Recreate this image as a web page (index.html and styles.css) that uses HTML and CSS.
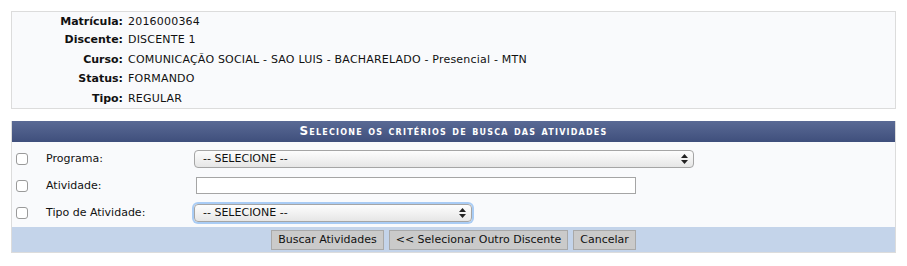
FILE: index.html
```html
<!DOCTYPE html>
<html lang="pt-BR">
  <head>
    <meta charset="UTF-8" />
    <link rel="stylesheet" href="styles.css">
    <title>Busca de Atividades</title>
  </head>
  <body>
    <div class="page">
      <div class="info">
        <div class="info-row"><span class="info-label">Matrícula:</span><span class="info-value">2016000364</span></div>
        <div class="info-row"><span class="info-label">Discente:</span><span class="info-value">DISCENTE 1</span></div>
        <div class="info-row"><span class="info-label">Curso:</span><span class="info-value">COMUNICAÇÃO SOCIAL - SAO LUIS - BACHARELADO - Presencial - MTN</span></div>
        <div class="info-row"><span class="info-label">Status:</span><span class="info-value">FORMANDO</span></div>
        <div class="info-row"><span class="info-label">Tipo:</span><span class="info-value">REGULAR</span></div>
      </div>

      <div class="form">
        <div class="form-title">Selecione os critérios de busca das atividades</div>
        <div class="form-body">
          <div class="form-row">
            <input type="checkbox" class="check">
            <label>Programa:</label>
            <span class="select select-wide">
              <select><option>-- SELECIONE --</option></select>
              <svg class="arrows" width="7" height="10" viewBox="0 0 7 10"><path d="M3.5 0 L7 4 H0 Z M3.5 10 L7 6 H0 Z" fill="#222"/></svg>
            </span>
          </div>
          <div class="form-row">
            <input type="checkbox" class="check">
            <label>Atividade:</label>
            <input type="text" class="text">
          </div>
          <div class="form-row">
            <input type="checkbox" class="check">
            <label>Tipo de Atividade:</label>
            <span class="select select-short focus">
              <select><option>-- SELECIONE --</option></select>
              <svg class="arrows" width="7" height="10" viewBox="0 0 7 10"><path d="M3.5 0 L7 4 H0 Z M3.5 10 L7 6 H0 Z" fill="#222"/></svg>
            </span>
          </div>
        </div>
        <div class="form-foot">
          <button>Buscar Atividades</button>
          <button>&lt;&lt; Selecionar Outro Discente</button>
          <button>Cancelar</button>
        </div>
      </div>
    </div>
  </body>
</html>
```
FILE: styles.css
```css
body {
  margin: 0;
  font-family: "DejaVu Sans", Verdana, sans-serif;
  font-size: 11px;
  color: #111;
  background: #fff;
}

.page {
  padding: 11px;
  width: 885px;
}

.info {
  background-color: #f9fafc;
  border: 1px solid #dcdcdc;
}

.info-row {
  display: flex;
  height: 19.5px;
  align-items: center;
  gap: 5px;
}

.info-row:first-child {
  height: 18px;
}

.info-label {
  width: 111px;
  text-align: right;
  font-weight: bold;
}

.info-value {
  letter-spacing: 0.2px;
}

.form {
  margin-top: 12px;
  border: 1px solid #dcdcdc;
  border-top: none;
}

.form-title {
  height: 21px;
  line-height: 21px;
  text-align: center;
  color: #fff;
  font-weight: bold;
  font-variant: small-caps;
  letter-spacing: 1.2px;
  font-size: 12px;
  background: linear-gradient(#5a6a95, #3f4f7c);
}

.form-body {
  background-color: #f9fafc;
  padding: 3px 0 1px;
}

.form-row {
  display: grid;
  grid-template-columns: 34px 148px auto;
  align-items: center;
  height: 27px;
}

.check {
  appearance: none;
  width: 12px;
  height: 12px;
  margin: 0 0 0 4px;
  border: 1px solid #9a9a9a;
  border-radius: 3px;
  background: #fff;
}

.select {
  position: relative;
  justify-self: start;
  display: inline-block;
  height: 18px;
}

.select select {
  appearance: none;
  display: block;
  height: 18px;
  padding: 0 0 0 8px;
  font-family: inherit;
  font-size: 11px;
  color: #111;
  border: 1px solid #a5a5a5;
  border-radius: 4px;
  background: linear-gradient(#fdfdfd, #e6e6e6);
}

.select-wide select {
  width: 500px;
}

.select-short select {
  width: 278px;
}

.select.focus select {
  outline: none;
  box-shadow: 0 0 0 2px #a9ccf5;
}

.arrows {
  position: absolute;
  right: 6px;
  top: 4px;
}

.text {
  justify-self: start;
  width: 440px;
  height: 17px;
  margin-left: 2px;
  box-sizing: border-box;
  border: 1px solid #a5a5a5;
  background: #fff;
}

.form-foot {
  background-color: #c4d4ea;
  height: 25px;
  display: flex;
  justify-content: center;
  align-items: center;
  gap: 5px;
}

button {
  font-family: inherit;
  font-size: 11px;
  color: #111;
  height: 20px;
  padding: 0 6px;
  border: 1px solid #a9a9a9;
  background-color: #cacaca;
}
```
